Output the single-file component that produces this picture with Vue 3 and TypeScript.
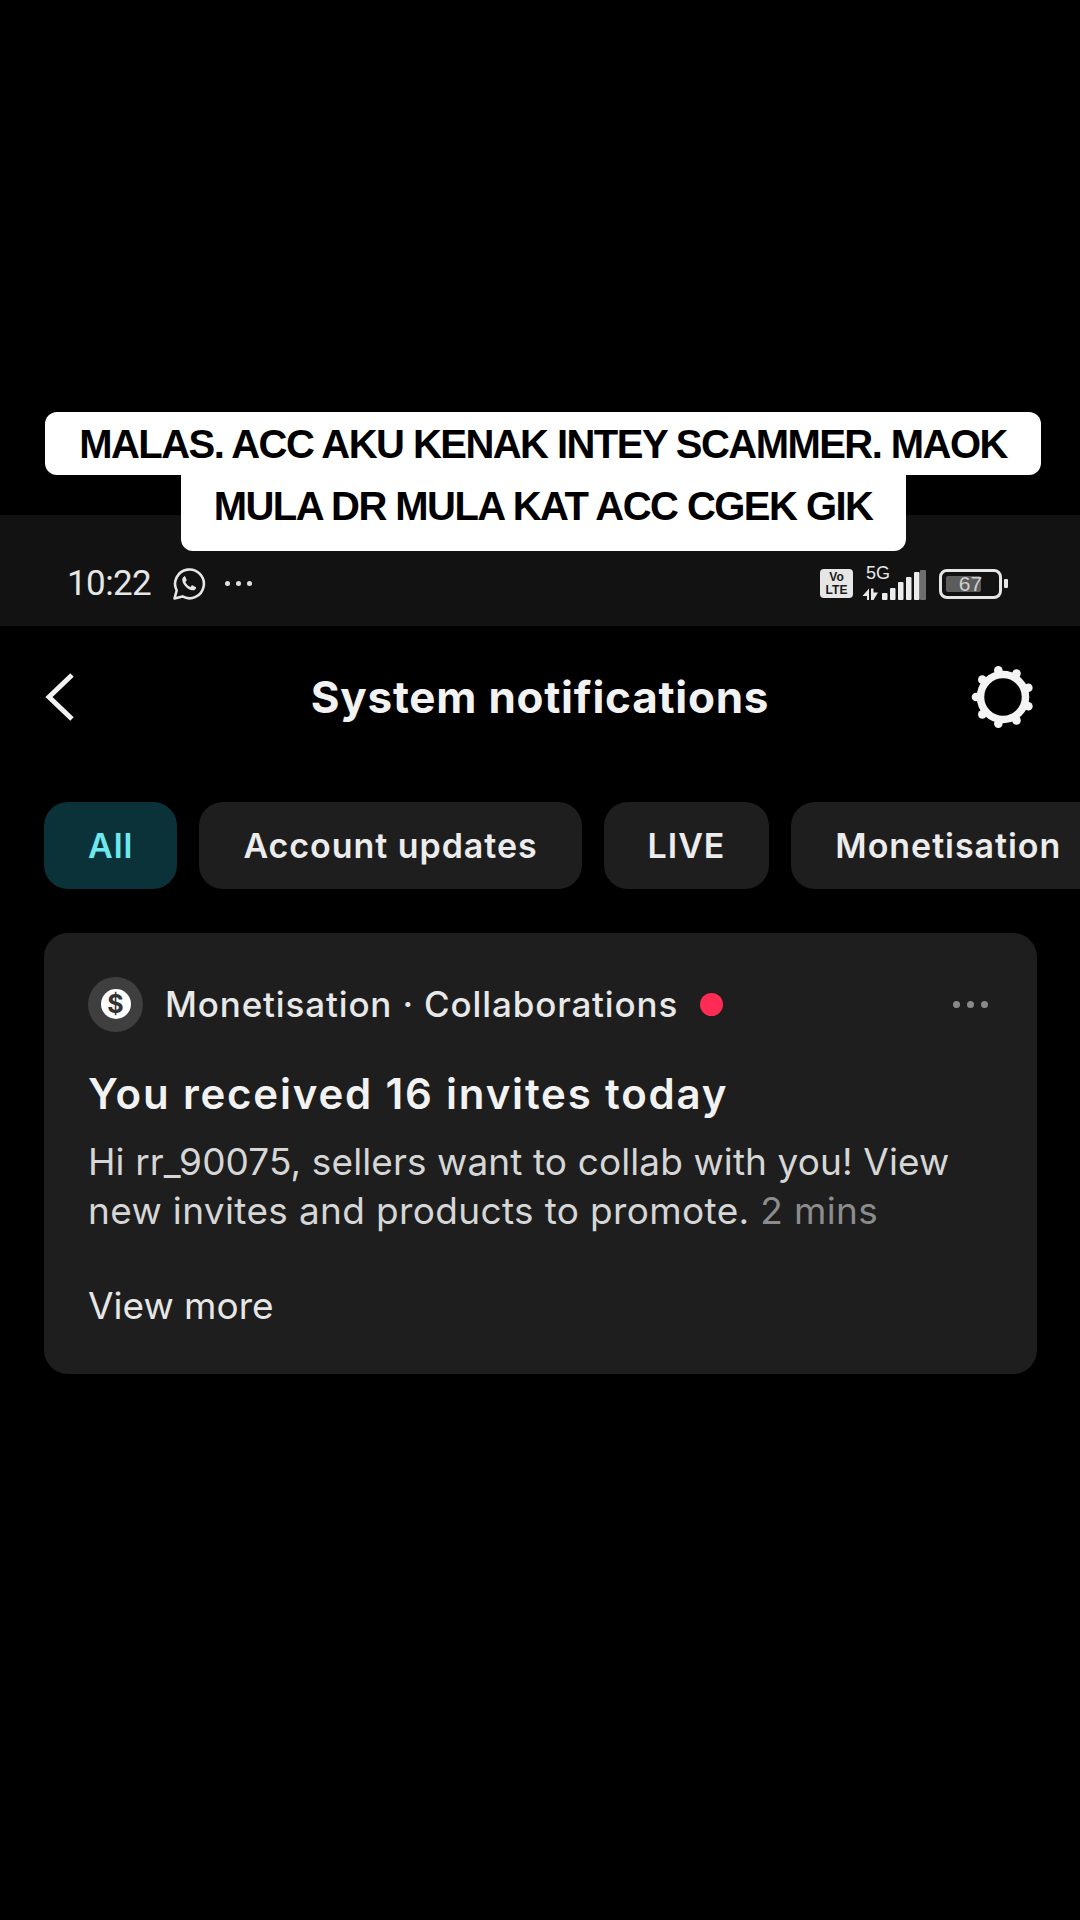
<script setup lang="ts">
const chips: { label: string; active?: boolean }[] = [
  { label: 'All', active: true },
  { label: 'Account updates' },
  { label: 'LIVE' },
  { label: 'Monetisation' },
]
const gearBumps = Array.from({ length: 9 }, (_, i) => {
  const a = ((180 + i * 40) * Math.PI) / 180
  return { cx: 32 + 27 * Math.cos(a), cy: 32 + 27 * Math.sin(a) }
})
const bars = [
  { x: 20, h: 7 },
  { x: 28, h: 12 },
  { x: 36, h: 18 },
  { x: 44, h: 23 },
  { x: 52, h: 28 },
]
</script>

<template>
  <div class="page">
    <div class="caption">
      <span class="cap-line">MALAS. ACC AKU KENAK INTEY SCAMMER. MAOK</span>
      <span class="cap-line second">MULA DR MULA KAT ACC CGEK GIK</span>
    </div>

    <div class="status">
      <div class="status-left">
        <span class="time">10:22</span>
        <svg class="wa" viewBox="0 0 34 34" fill="none">
          <path d="M2.5 31.5l2.2-8A14.4 14.4 0 1 1 10.4 29.4z" stroke="#e6e6e6" stroke-width="2.6" stroke-linejoin="round" />
          <path d="M12.2 9.6c-1.6.9-2.4 2.6-1.7 4.8 1.2 3.8 4.6 7.2 8.4 8.6 2.3.8 4.2 0 5-1.6.3-.7.2-1.2-.3-1.5l-2.9-1.5c-.5-.2-.9-.1-1.2.3l-1 1.2c-2.300-.9-4.200-2.800-5.200-5l1.100-1.100c.3-.3.4-.7.2-1.100l-1.300-3c-.2-.5-.7-.7-1.100-.5z" fill="#e6e6e6" />
        </svg>
        <span class="dots">
          <i></i><i></i><i></i>
        </span>
      </div>
      <div class="status-right">
        <div class="volte"><span>Vo</span><span>LTE</span></div>
        <svg class="signal" viewBox="0 -6 64 40" fill="none">
          <text x="4" y="12" class="five-g">5G</text>
          <path d="M7 21.500v11.500h-2v-4h-4.500zM9 21.500h2.500v4h4.500l-4.500 7.500h-2.500z" fill="#e8e8e8" />
          <rect v-for="b in bars" :key="b.x" :x="b.x" :y="33 - b.h" width="5.500" :height="b.h" rx="1" fill="#ececec" />
          <rect x="58" y="3" width="6" height="30" rx="1" fill="#6e6e6e" />
        </svg>
        <div class="battery">
          <div class="battery-body">
            <div class="battery-fill"></div>
            <span class="battery-num">67</span>
          </div>
          <div class="battery-tip"></div>
        </div>
      </div>
    </div>

    <div class="header">
      <svg class="back" viewBox="0 0 30 50" fill="none">
        <path d="M27 3L4 25l23 22" stroke="#f2f2f2" stroke-width="5" />
      </svg>
      <h1 class="title">System notifications</h1>
      <svg class="gear" viewBox="0 0 64 64" fill="none">
        <circle cx="32" cy="32" r="22.500" stroke="#f4f4f4" stroke-width="7.500" />
        <circle v-for="(b, i) in gearBumps" :key="i" :cx="b.cx" :cy="b.cy" r="4.300" fill="#f4f4f4" />
      </svg>
    </div>

    <div class="chips">
      <div v-for="c in chips" :key="c.label" class="chip" :class="{ active: c.active }">{{ c.label }}</div>
    </div>

    <div class="card">
      <div class="card-head">
        <div class="avatar">
          <div class="coin">$</div>
        </div>
        <span class="meta">Monetisation · Collaborations</span>
        <span class="red-dot"></span>
        <span class="more"><i></i><i></i><i></i></span>
      </div>
      <h2 class="card-title">You received 16 invites today</h2>
      <p class="card-body">
        <span class="body-line first">Hi rr_90075, sellers want to collab with you! View</span>
        <span class="body-line">new invites and products to promote. <span class="ago">2 mins</span></span>
      </p>
      <div class="view-more">View more</div>
    </div>
  </div>
</template>

<style>
html,
body {
  margin: 0;
  background: #000;
}
</style>

<style scoped>
.page {
  position: relative;
  width: 1080px;
  height: 1920px;
  overflow: hidden;
  background: #000;
  padding-top: 515px;
  box-sizing: border-box;
  font-family: Inter, "Liberation Sans", sans-serif;
  color: #f2f2f2;
}
.caption {
  position: absolute;
  top: 412px;
  left: 45px;
  width: 996px;
  display: flex;
  flex-direction: column;
  align-items: center;
  font-family: "Liberation Sans", Arial, sans-serif;
  font-weight: 700;
  font-size: 40px;
  letter-spacing: -1.55px;
  color: #000;
}
.cap-line {
  background: #fff;
  border-radius: 12px;
  height: 63px;
  line-height: 65px;
  width: 996px;
  text-align: center;
}
.cap-line.second {
  width: 725px;
  height: 76px;
  line-height: 63px;
  border-radius: 0 0 12px 12px;
}
.status {
  height: 111px;
  background: #121212;
  display: flex;
  align-items: center;
  justify-content: space-between;
  padding: 26px 72px 0 67px;
  box-sizing: border-box;
}
.status-left,
.status-right {
  display: flex;
  align-items: center;
}
.time {
  font-family: Roboto, sans-serif;
  font-weight: 400;
  font-size: 35px;
  width: 85px;
  letter-spacing: -0.6px;
  color: #e6e6e6;
  white-space: nowrap;
}
.wa {
  width: 34px;
  height: 34px;
  margin-left: 20px;
}
.dots {
  display: flex;
  gap: 6px;
  margin-left: 19px;
}
.dots i {
  width: 5px;
  height: 5px;
  border-radius: 50%;
  background: #e0e0e0;
}
.volte {
  width: 33px;
  height: 29px;
  background: #e6e6e6;
  border-radius: 4px;
  color: #1a1a1a;
  font-family: "Liberation Sans", sans-serif;
  font-size: 12px;
  font-weight: 700;
  line-height: 13px;
  display: flex;
  flex-direction: column;
  align-items: center;
  justify-content: center;
}
.signal {
  width: 64px;
  height: 40px;
  margin: -6px 0 0 9px;
}
.five-g {
  font-family: "Liberation Sans", sans-serif;
  font-size: 18px;
  fill: #e8e8e8;
}
.battery {
  display: flex;
  align-items: center;
  margin-left: 13px;
}
.battery-body {
  position: relative;
  width: 63px;
  height: 30px;
  border: 3px solid #e6e6e6;
  border-radius: 8px;
  box-sizing: border-box;
  display: flex;
  align-items: center;
  justify-content: center;
}
.battery-fill {
  position: absolute;
  left: 4px;
  top: 4px;
  bottom: 4px;
  width: 35px;
  background: #5c5c5c;
  border-radius: 2px;
}
.battery-num {
  position: relative;
  font-family: "Liberation Sans", sans-serif;
  font-size: 21px;
  color: #cfcfcf;
}
.battery-tip {
  width: 4px;
  height: 9px;
  margin-left: 2px;
  background: #e6e6e6;
  border-radius: 1px;
}
.header {
  height: 141px;
  display: grid;
  grid-template-columns: 1fr auto 1fr;
  align-items: center;
  padding: 0 45px;
}
.back {
  width: 30px;
  height: 50px;
}
.title {
  margin: 0;
  font-size: 44px;
  font-weight: 700;
  letter-spacing: 0.75px;
  color: #f2f2f2;
  white-space: nowrap;
}
.gear {
  width: 64px;
  height: 64px;
  justify-self: end;
}
.chips {
  margin-top: 35px;
  padding-left: 44px;
  display: flex;
  gap: 22px;
  white-space: nowrap;
}
.chip {
  flex: none;
  height: 87px;
  line-height: 87px;
  padding: 0 44px;
  border-radius: 24px;
  background: #1e1e1e;
  font-size: 34px;
  font-weight: 600;
  letter-spacing: 0.95px;
  color: #ececec;
}
.chip.active {
  background: #0a3238;
  color: #6ee7ee;
}
.card {
  margin: 44px 43px 0 44px;
  height: 441px;
  background: #1e1e1e;
  border-radius: 24px;
  padding: 44px;
  box-sizing: border-box;
}
.card-head {
  display: flex;
  align-items: center;
  height: 54px;
}
.avatar {
  width: 55px;
  height: 55px;
  border-radius: 50%;
  background: #3f3f3f;
  display: flex;
  align-items: center;
  justify-content: center;
}
.coin {
  width: 30px;
  height: 30px;
  border-radius: 50%;
  background: #fff;
  color: #333;
  font-size: 25px;
  font-weight: 700;
  line-height: 30px;
  text-align: center;
}
.meta {
  margin-left: 22px;
  font-size: 35px;
  font-weight: 500;
  letter-spacing: 0.85px;
  color: #e8e8e8;
  white-space: nowrap;
}
.red-dot {
  width: 23px;
  height: 23px;
  margin-left: 22px;
  border-radius: 50%;
  background: #fe2c55;
}
.more {
  margin-left: auto;
  margin-right: 5px;
  display: flex;
  gap: 7px;
}
.more i {
  width: 7px;
  height: 7px;
  border-radius: 50%;
  background: #8a8a8a;
}
.card-title {
  margin: 38px 0 0;
  font-size: 42px;
  line-height: 50px;
  font-weight: 600;
  letter-spacing: 1.8px;
  color: #f2f2f2;
  white-space: nowrap;
}
.card-body {
  margin: 18px 0 0;
  font-size: 37px;
  line-height: 49px;
  letter-spacing: 0.35px;
  color: #d6d6d6;
  white-space: nowrap;
}
.body-line {
  display: block;
}
.body-line.first {
  letter-spacing: 0.1px;
}
.ago {
  color: #8c8c8c;
}
.view-more {
  margin-top: 46px;
  font-size: 37px;
  line-height: 49px;
  color: #e6e6e6;
}
</style>
